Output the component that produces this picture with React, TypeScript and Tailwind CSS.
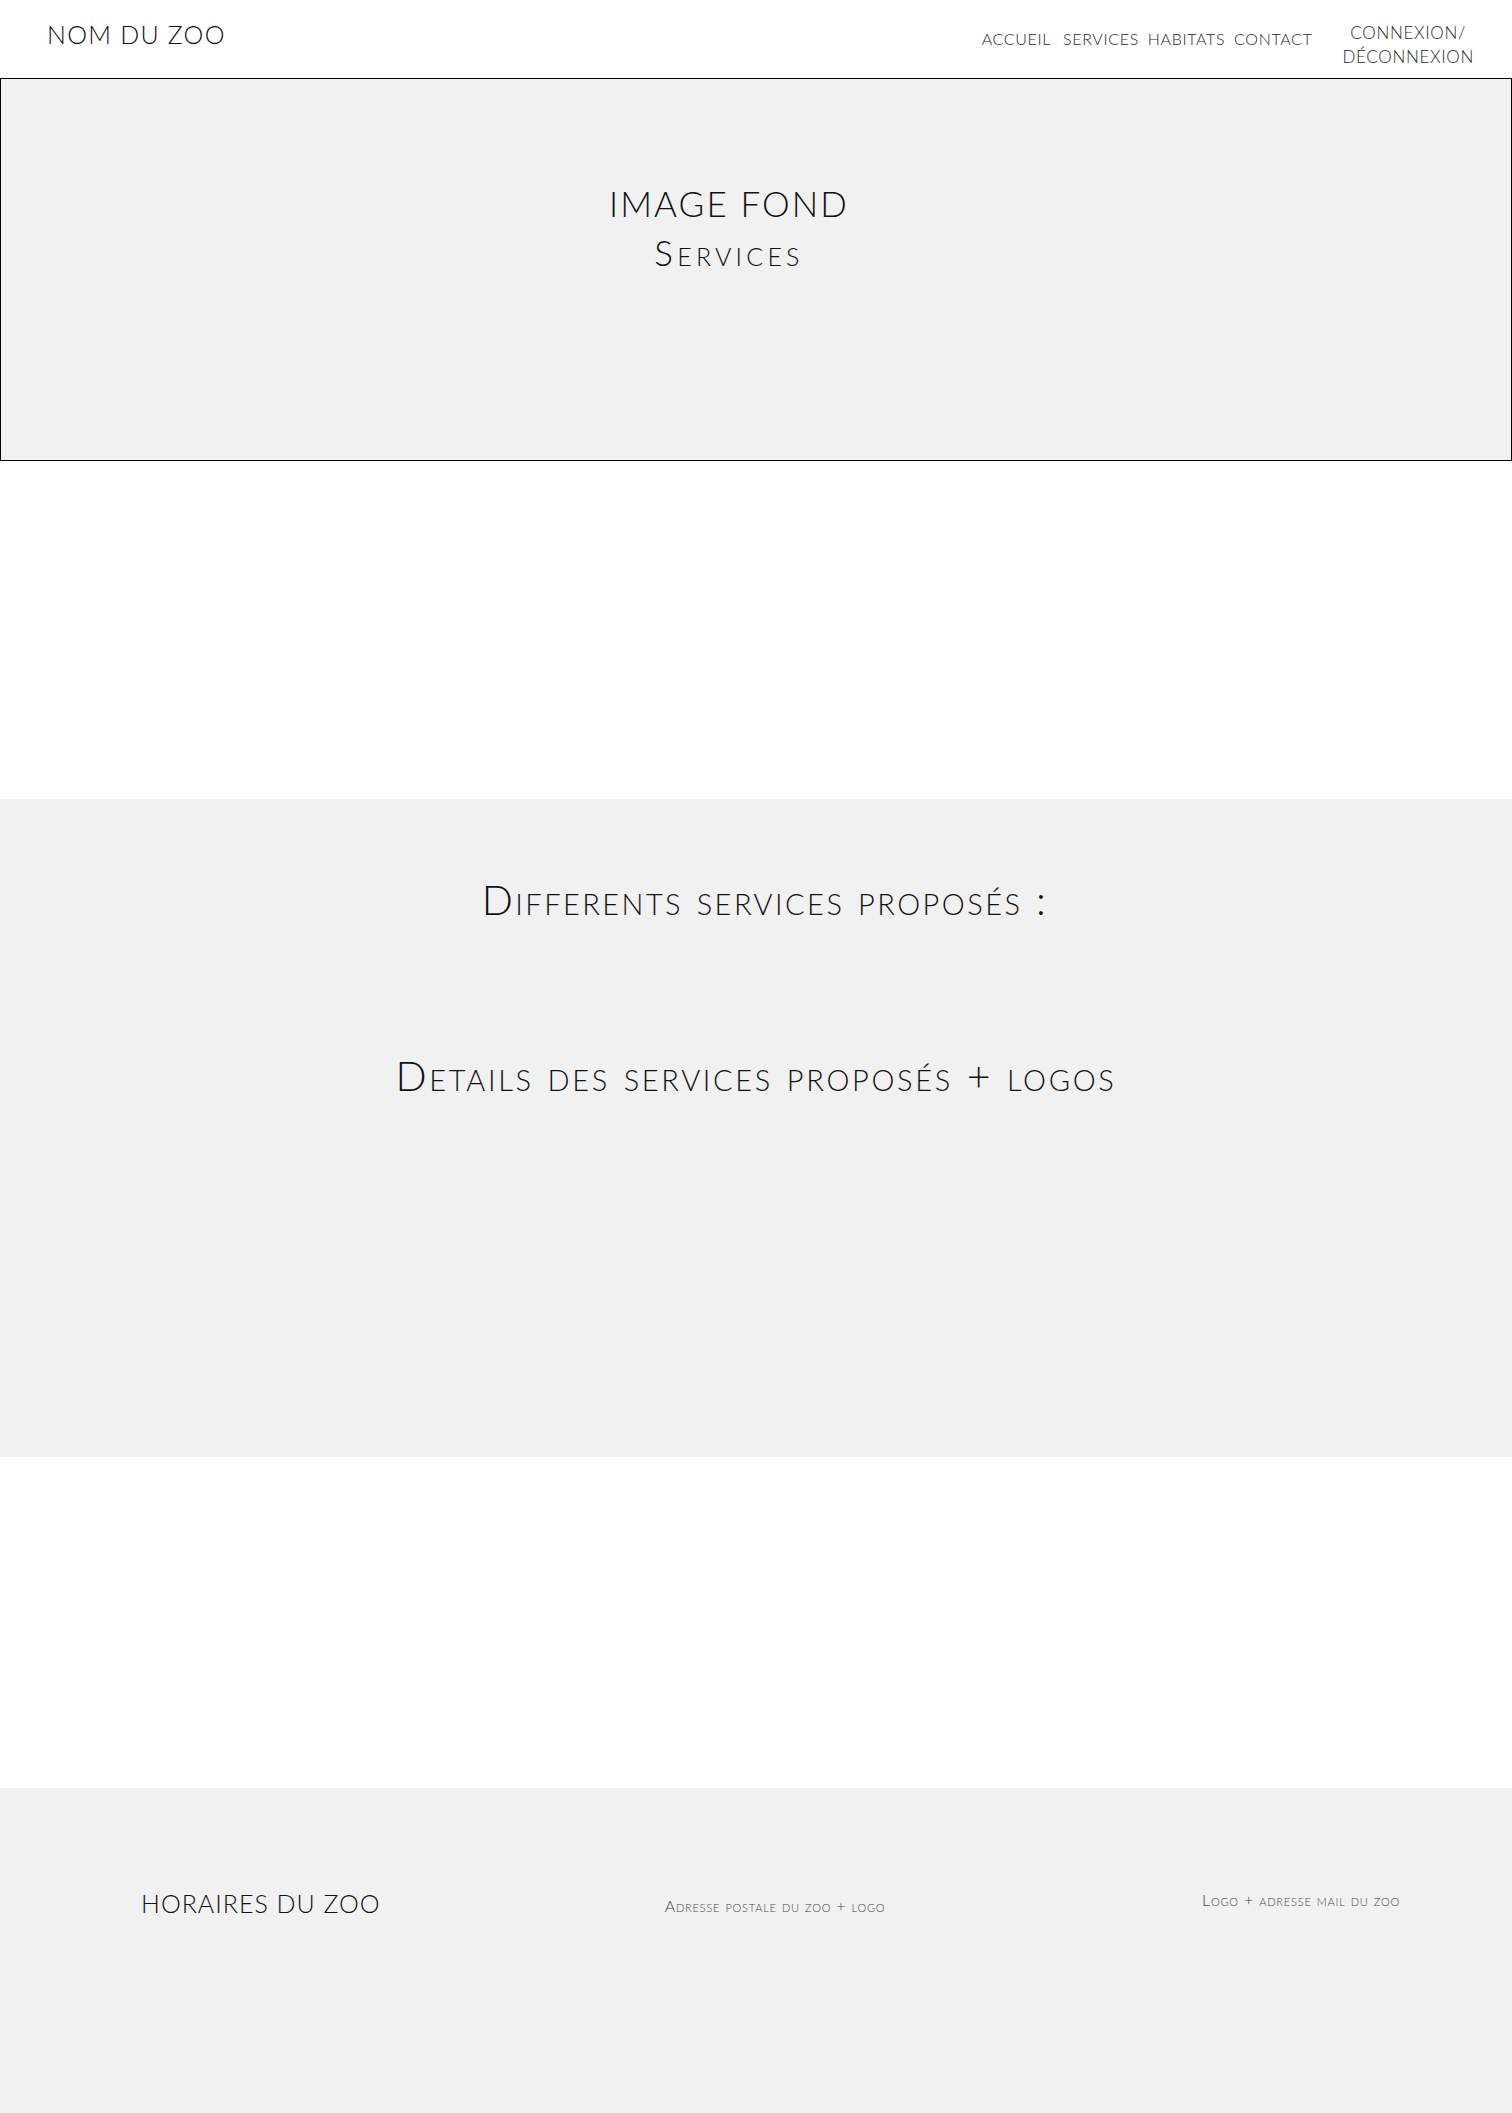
import React from "react";

const font = "font-['Lato','Liberation_Sans',sans-serif] font-light [font-variant:small-caps]";

export default function App() {
  return (
    <div className={`w-[1512px] bg-white text-[#111] ${font}`}>
      <header className="h-[78px] flex items-start justify-between">
        <div className="pl-[47px] pt-[18px] text-[25px] tracking-[0.05em] leading-[32px]">NOM DU ZOO</div>
        <div className="flex items-start pr-[38px]">
          <nav className="flex gap-[9px] pt-[27px] text-[16px] leading-[24px] tracking-[0.04em] text-[#2a2a2a]">
            <span className="mr-[3px]">ACCUEIL</span>
            <span>SERVICES</span>
            <span>HABITATS</span>
            <span>CONTACT</span>
          </nav>
          <div className="ml-[30px] pt-[21px] text-[17px] leading-[24px] tracking-[0.04em] text-[#2a2a2a] text-center">
            CONNEXION/
            <br />
            DÉCONNEXION
          </div>
        </div>
      </header>
      <section className="h-[383px] border border-black bg-[#f1f1f1] flex justify-center pr-[54px]">
        <div className="pt-[100px] text-center text-[35px] leading-[49px] tracking-[0.06em]">
          <div>IMAGE FOND</div>
          <div className="tracking-[0.12em]">Services</div>
        </div>
      </section>
      <div className="h-[338px]" />
      <section className="h-[658px] bg-[#f1f1f1] flex flex-col items-center">
        <div className="pt-[75px] pl-[18px] text-[41px] leading-[52px] tracking-[0.06em]">Differents services proposés :</div>
        <div className="pt-[124px] text-[41px] leading-[52px] tracking-[0.065em]">Details des services proposés + logos</div>
      </section>
      <div className="h-[331px]" />
      <footer className="h-[325px] bg-[#f1f1f1] flex items-start">
        <div className="pl-[141px] pt-[100px] text-[25px] leading-[30px] tracking-[0.04em] w-[520px]">HORAIRES DU ZOO</div>
        <div className="pt-[108px] w-[510px] text-[#444] text-[16px] leading-[20px] tracking-[0.05em] text-center">Adresse postale du zoo + logo</div>
        <div className="pt-[102px] ml-[120px] w-[302px] text-[#444] text-[16px] leading-[20px] tracking-[0.05em] text-center">Logo + adresse mail du zoo</div>
      </footer>
    </div>
  );
}
